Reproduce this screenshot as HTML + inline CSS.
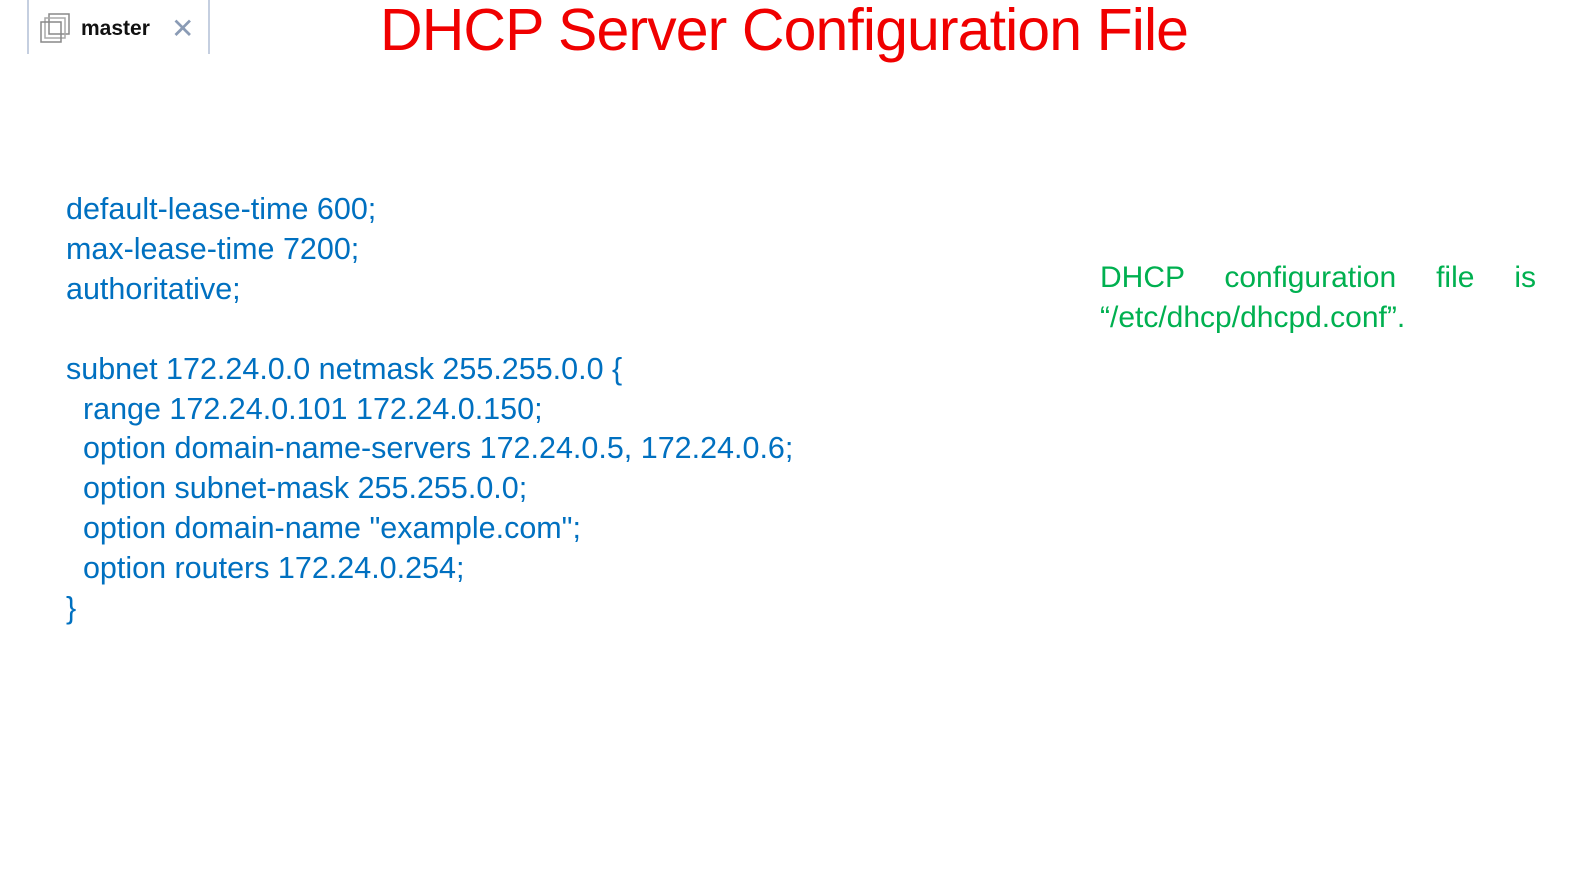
<!DOCTYPE html>
<html><head><style>
body{margin:0;width:1577px;height:874px;background:#fff;position:relative;overflow:hidden;font-family:"Liberation Sans",sans-serif}
.tab{position:absolute;left:27px;top:0;width:179px;height:54px;border:2px solid #c5cfe0;border-top:none;border-bottom:none;background:#fff}
.tab .t{position:absolute;left:52px;top:17px;font-weight:bold;font-size:21px;color:#111}
.tab .x{position:absolute;left:142px;top:12px;font-size:28px;color:#8a9bb5}
h1{position:absolute;left:380px;top:-4px;margin:0;font-weight:normal;color:#f00000;font-size:59px;white-space:nowrap;letter-spacing:-0.9px}
.code{position:absolute;left:66px;top:190px;color:#0070c0;font-size:30.5px;line-height:39.9px;white-space:pre}
.note{position:absolute;left:1100px;top:258px;width:436px;color:#00b050;font-size:30px;line-height:40px;text-align:justify;text-align-last:left}
</style></head><body>
<div class="tab">
<svg style="position:absolute;left:11px;top:12px" width="32" height="32" viewBox="0 0 32 32" fill="none" stroke="#888" stroke-width="1.5"><rect x="9" y="2" width="20" height="20"/><rect x="5" y="6" width="20" height="20" stroke="#aaa"/><rect x="1" y="10" width="20" height="20"/></svg>
<div class="t">master</div><div class="x">✕</div></div>
<h1>DHCP Server Configuration File</h1>
<div class="code">default-lease-time 600;
max-lease-time 7200;
authoritative;

subnet 172.24.0.0 netmask 255.255.0.0 {
  range 172.24.0.101 172.24.0.150;
  option domain-name-servers 172.24.0.5, 172.24.0.6;
  option subnet-mask 255.255.0.0;
  option domain-name "example.com";
  option routers 172.24.0.254;
}</div>
<div class="note">DHCP configuration file is “/etc/dhcp/dhcpd.conf”.</div>
</body></html>
